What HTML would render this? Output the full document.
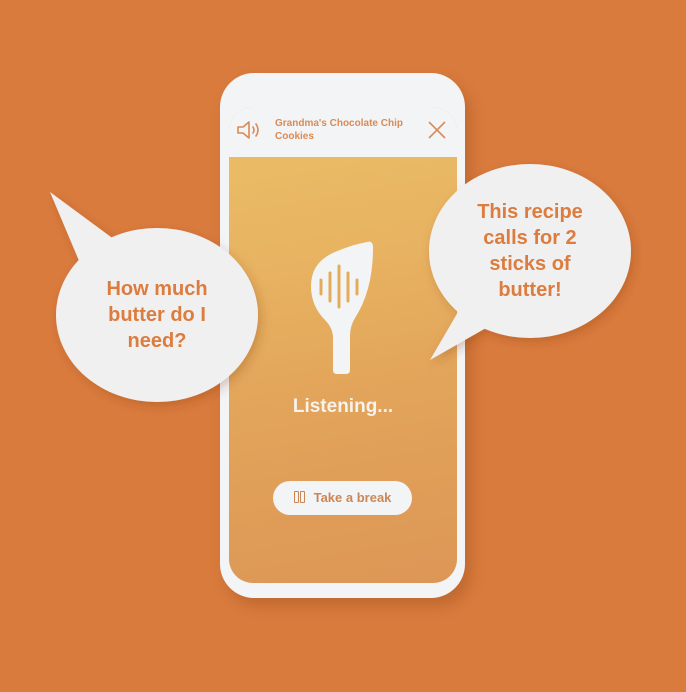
<!DOCTYPE html>
<html><head><style>
html,body{margin:0;padding:0}
body{width:686px;height:692px;background:#D97B3D;position:relative;overflow:hidden;font-family:"Liberation Sans",sans-serif}
.phone{position:absolute;left:220px;top:73px;width:245px;height:525px;background:#F3F4F6;border-radius:34px;box-shadow:6px 8px 14px rgba(120,50,10,.25)}
.screen{position:absolute;left:229px;top:107px;width:228px;height:476px;border-radius:24px;overflow:hidden;background:linear-gradient(170deg,#EBBF67 0%,#E8B462 30%,#E2A45A 60%,#DD9656 100%)}
.hdr{position:absolute;left:0;top:0;width:100%;height:50px;background:#F3F4F6}
.title{position:absolute;left:46px;top:10px;font-size:10px;font-weight:bold;color:#D98A55;line-height:13px}
.listen{position:absolute;left:0;width:100%;top:289px;text-align:center;color:#F6F2EC;font-weight:bold;font-size:19px}
.btn{position:absolute;left:44px;top:374px;width:139px;height:34px;border-radius:17px;background:#F3F4F6;color:#C98758;font-weight:bold;font-size:13px;line-height:34px;text-align:center}
.bt{position:absolute;text-align:center;color:#DC7C3E;font-weight:bold;font-size:20px;line-height:26px}
.pb{display:inline-block;width:3px;height:10px;border:1.3px solid #C98758;border-radius:1px;vertical-align:-1px}
</style></head><body>
<div class="phone"></div>
<div class="screen">
 <div class="hdr">
  <svg style="position:absolute;left:7px;top:13px" width="28" height="20" viewBox="0 0 28 20"><path d="M2 7h5l6-5v16l-6-5H2z" fill="none" stroke="#D98A55" stroke-width="1.6" stroke-linejoin="round"/><path d="M17 7q2 3 0 6M20 4q4 6 0 12" fill="none" stroke="#D98A55" stroke-width="1.6" stroke-linecap="round"/></svg>
  <div class="title">Grandma's Chocolate Chip<br>Cookies</div>
  <svg style="position:absolute;left:199px;top:14px" width="18" height="18" viewBox="0 0 18 18"><path d="M1 1L17 17M17 1L1 17" stroke="#D98A55" stroke-width="1.6"/></svg>
 </div>
 <svg style="position:absolute;left:78px;top:133px" width="70" height="136" viewBox="0 0 70 136">
  <path d="M60 2Q66 0 66 8Q66 50 48 78Q43 86 43 96V130Q43 134 39 134H30Q26 134 26 130V98Q26 88 18 80Q4 66 4 46Q4 22 28 12Q44 5 60 2Z" fill="#F3F4F6"/>
  <g stroke="#E3AC5C" stroke-width="3" stroke-linecap="round"><path d="M14 40v14M23 33v28M32 26v41M41 33v28M50 40v14"/></g>
 </svg>
 <div class="listen">Listening...</div>
 <div class="btn"><span class="pb"></span><span class="pb" style="margin-left:1px;margin-right:9px"></span>Take a break</div>
</div>
<svg style="position:absolute;left:0;top:0" width="686" height="692">
 <defs><filter id="s"><feDropShadow dx="3" dy="4" stdDeviation="5" flood-color="#7a3000" flood-opacity=".25"/></filter></defs>
 <g filter="url(#s)" fill="#F0F0F0">
  <path d="M50 192L115 240L85 275Z"/>
  <ellipse cx="157" cy="315" rx="101" ry="87"/>
  <path d="M430 360L465 300L500 320Z"/>
  <ellipse cx="530" cy="251" rx="101" ry="87"/>
 </g>
</svg>
<div class="bt" style="left:57px;top:276px;width:200px">How much<br>butter do I<br>need?</div>
<div class="bt" style="left:430px;top:199px;width:200px">This recipe<br>calls for 2<br>sticks of<br>butter!</div>
</body></html>
